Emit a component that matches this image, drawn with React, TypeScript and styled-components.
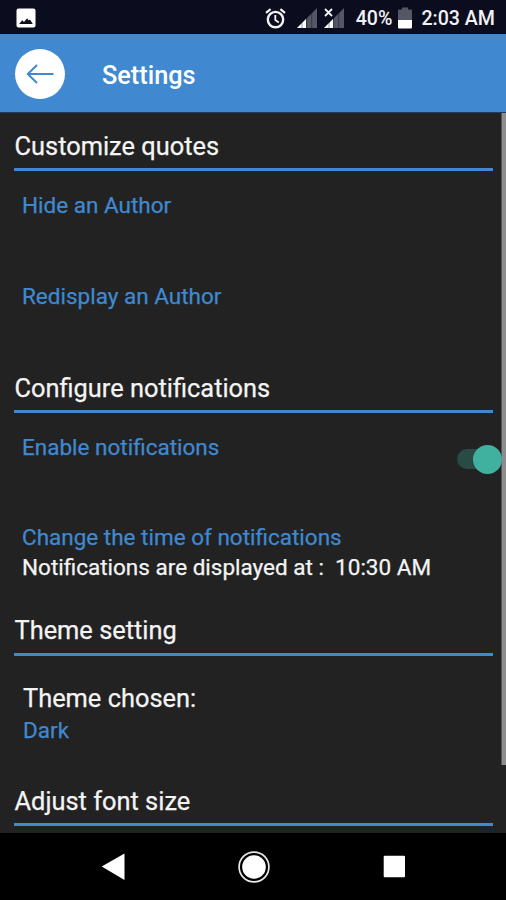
import React from "react";
import styled, { createGlobalStyle } from "styled-components";

const GlobalStyle = createGlobalStyle`
  * { box-sizing: border-box; }
  html, body { margin: 0; padding: 0; background: #000; }
  body { font-family: Roboto, "Liberation Sans", sans-serif; overflow: hidden; }
`;

const BLUE = "#4089d0";

const Screen = styled.div`
  width: 506px;
  height: 900px;
  display: flex;
  flex-direction: column;
  overflow: hidden;
  background: #222;
`;

const StatusBar = styled.header`
  height: 34px;
  flex: none;
  display: flex;
  align-items: center;
  padding: 3px 11px 0 16px;
  background: #0b0d1f;
  border-bottom: 1px solid #03091a;
  color: #f2f2f4;
`;

const StatusIcon = styled.svg<{ $gap?: number }>`
  display: block;
  flex: none;
  margin-right: ${(p) => p.$gap ?? 0}px;
`;

const Spacer = styled.div`
  flex: 1;
`;

const StatusText = styled.span<{ $gap?: number }>`
  font-size: 19.6px;
  line-height: 24px;
  font-weight: 500;
  white-space: nowrap;
  margin-top: 2px;
  margin-right: ${(p) => p.$gap ?? 0}px;
`;

const AppBar = styled.div`
  height: 79px;
  flex: none;
  display: flex;
  align-items: center;
  gap: 37px;
  padding: 2px 0 0 15px;
  background: ${BLUE};
  border-bottom: 1px solid #1c3c60;
`;

const BackButton = styled.button`
  width: 50px;
  height: 50px;
  padding: 0;
  border: 0;
  border-radius: 50%;
  background: #fff;
  display: flex;
  align-items: center;
  justify-content: center;
`;

const Title = styled.h1`
  margin: 3px 0 0;
  font-size: 25.3px;
  line-height: 30px;
  font-weight: 500;
  color: #fff;
`;

const Body = styled.main`
  flex: 1;
  min-height: 0;
  display: flex;
  background: #222;
`;

const Content = styled.div`
  flex: 1;
  padding-left: 14px;
  padding-top: 18px;
`;

const ScrollThumb = styled.div`
  width: 5px;
  height: 652px;
  background: #8d8d8d;
  border-left: 1px solid #555;
`;

const Section = styled.section<{ $height: number }>`
  height: ${(p) => p.$height}px;
  display: flex;
  flex-direction: column;
`;

const Heading = styled.h2<{ $line?: number }>`
  margin: 0 8.5px 0 0;
  height: 40px;
  padding-left: 0.5px;
  font-size: 25.4px;
  line-height: ${(p) => p.$line ?? 31}px;
  font-weight: 400;
  color: #f4f4f4;
  -webkit-text-stroke: 0.25px currentColor;
  white-space: nowrap;
  border-bottom: 3px solid ${BLUE};
`;

const Item = styled.div<{ $top: number; $indent?: number }>`
  display: flex;
  justify-content: space-between;
  align-items: flex-start;
  margin-top: ${(p) => p.$top}px;
  padding-left: ${(p) => p.$indent ?? 8}px;
  height: 30px;
`;

const Label = styled.span<{ $light?: boolean; $size?: number }>`
  font-size: ${(p) => p.$size ?? 22.5}px;
  line-height: 30px;
  color: ${(p) => (p.$light ? "#f4f4f4" : BLUE)};
  -webkit-text-stroke: 0.25px currentColor;
  white-space: pre;
`;

const Track = styled.div`
  width: 44px;
  height: 20px;
  margin-top: 17px;
  border-radius: 10px;
  background: #2a4b45;
  display: flex;
  align-items: center;
  justify-content: flex-end;
`;

const Thumb = styled.div`
  position: relative;
  z-index: 1;
  flex: none;
  width: 29px;
  height: 29px;
  margin-right: -1px;
  border-radius: 50%;
  background: #40b19f;
`;

const NavBar = styled.nav`
  height: 67px;
  flex: none;
  background: #000;
  display: flex;
  align-items: center;
  justify-content: space-between;
  padding: 0 100px 0 100px;
`;

const NavIcon = styled.svg`
  display: block;
`;

export default function App() {
  return (
    <>
      <GlobalStyle />
      <Screen>
        <StatusBar>
          <StatusIcon width="20" height="20" viewBox="0 0 20 20">
            <rect x="0.5" y="0.5" width="19" height="19" rx="2" fill="#fff" />
            <path d="M3.2 16 L6.2 12.2 L8 14 L11.2 10.2 L12.6 12.4 L14 11.6 L16.8 16 Z" fill="#0b0d1f" />
          </StatusIcon>
          <Spacer />
          <StatusIcon $gap={11} width="21" height="21" viewBox="0 0 21 21" fill="none" stroke="#f2f2f4">
            <circle cx="10.5" cy="11.6" r="7.7" strokeWidth="2.4" />
            <path d="M10.3 7 V12 L13.8 14.4" strokeWidth="1.8" />
            <path d="M1 4.8 L5.6 1.1 M20 4.8 L15.4 1.1" strokeWidth="2.2" />
          </StatusIcon>
          <StatusIcon $gap={6.5} width="20" height="20" viewBox="0 0 20 20">
            <path d="M0 20 L20 0 V20 Z" fill="#555666" />
            <path d="M0 20 L9 11 V20 Z" fill="#fff" />
            <path d="M5 12 V20 M9.7 8 V20 M14.7 3 V20" stroke="#0b0d1f" strokeWidth="0.7" opacity="0.6" />
          </StatusIcon>
          <StatusIcon $gap={12} width="20" height="20" viewBox="0 0 20 20">
            <path d="M0 20 L20 0 V20 Z" fill="#555666" />
            <path d="M0 0 H10 V10 L0 20 Z" fill="#0b0d1f" />
            <path d="M0 20 L9 11 V20 Z" fill="#fff" />
            <path d="M5 12 V20 M9.7 8 V20 M14.7 3 V20" stroke="#0b0d1f" strokeWidth="0.7" opacity="0.6" />
            <path d="M1 1 L8 8 M8 1 L1 8" stroke="#f2f2f4" strokeWidth="1.8" />
          </StatusIcon>
          <StatusText $gap={5.5}>40%</StatusText>
          <StatusIcon $gap={9.5} width="14" height="22" viewBox="0 0 14 22">
            <path d="M4 0.5 H10 V2.5 H13 Q14 2.5 14 3.5 V13 H0 V3.5 Q0 2.5 1 2.5 H4 Z" fill="#555666" />
            <path d="M0 13 H14 V20.5 Q14 21.5 13 21.5 H1 Q0 21.5 0 20.5 Z" fill="#fff" />
          </StatusIcon>
          <StatusText>2:03 AM</StatusText>
        </StatusBar>

        <AppBar>
          <BackButton aria-label="Back">
            <svg width="28" height="20" viewBox="0 0 28 20" fill="none" stroke={BLUE} strokeWidth="2">
              <path d="M27.5 10 H1.8 M11 1 L1.8 10 L11 19" />
            </svg>
          </BackButton>
          <Title>Settings</Title>
        </AppBar>

        <Body>
          <Content>
            <Section $height={242}>
              <Heading>Customize quotes</Heading>
              <Item $top={19}><Label>Hide an Author</Label></Item>
              <Item $top={61}><Label>Redisplay an Author</Label></Item>
            </Section>
            <Section $height={243}>
              <Heading>Configure notifications</Heading>
              <Item $top={19}>
                <Label>Enable notifications</Label>
                <Track role="switch" aria-checked="true"><Thumb /></Track>
              </Item>
              <Item $top={60}><Label>Change the time of notifications</Label></Item>
              <Item $top={0}><Label $light>{"Notifications are displayed at :  10:30 AM"}</Label></Item>
            </Section>
            <Section $height={170}>
              <Heading $line={29}>Theme setting</Heading>
              <Item $top={27} $indent={9}><Label $light $size={25.4}>Theme chosen:</Label></Item>
              <Item $top={2} $indent={9}><Label>Dark</Label></Item>
            </Section>
            <Section $height={40}>
              <Heading>Adjust font size</Heading>
            </Section>
          </Content>
          <ScrollThumb />
        </Body>

        <NavBar>
          <NavIcon width="25" height="30" viewBox="-0.7 0 25 30">
            <path d="M1 14.5 L23.8 1.5 V28 Z" fill="#fff" />
          </NavIcon>
          <NavIcon width="32" height="32" viewBox="0 0 32 32">
            <circle cx="16" cy="16" r="14.9" fill="none" stroke="#e8e8e8" strokeWidth="1.7" />
            <circle cx="16" cy="16" r="11.8" fill="#fff" />
          </NavIcon>
          <NavIcon width="23" height="23" viewBox="0 0 23 23">
            <rect x="0.7" y="0.7" width="21.3" height="21.6" rx="1" fill="#fff" />
          </NavIcon>
        </NavBar>
      </Screen>
    </>
  );
}
